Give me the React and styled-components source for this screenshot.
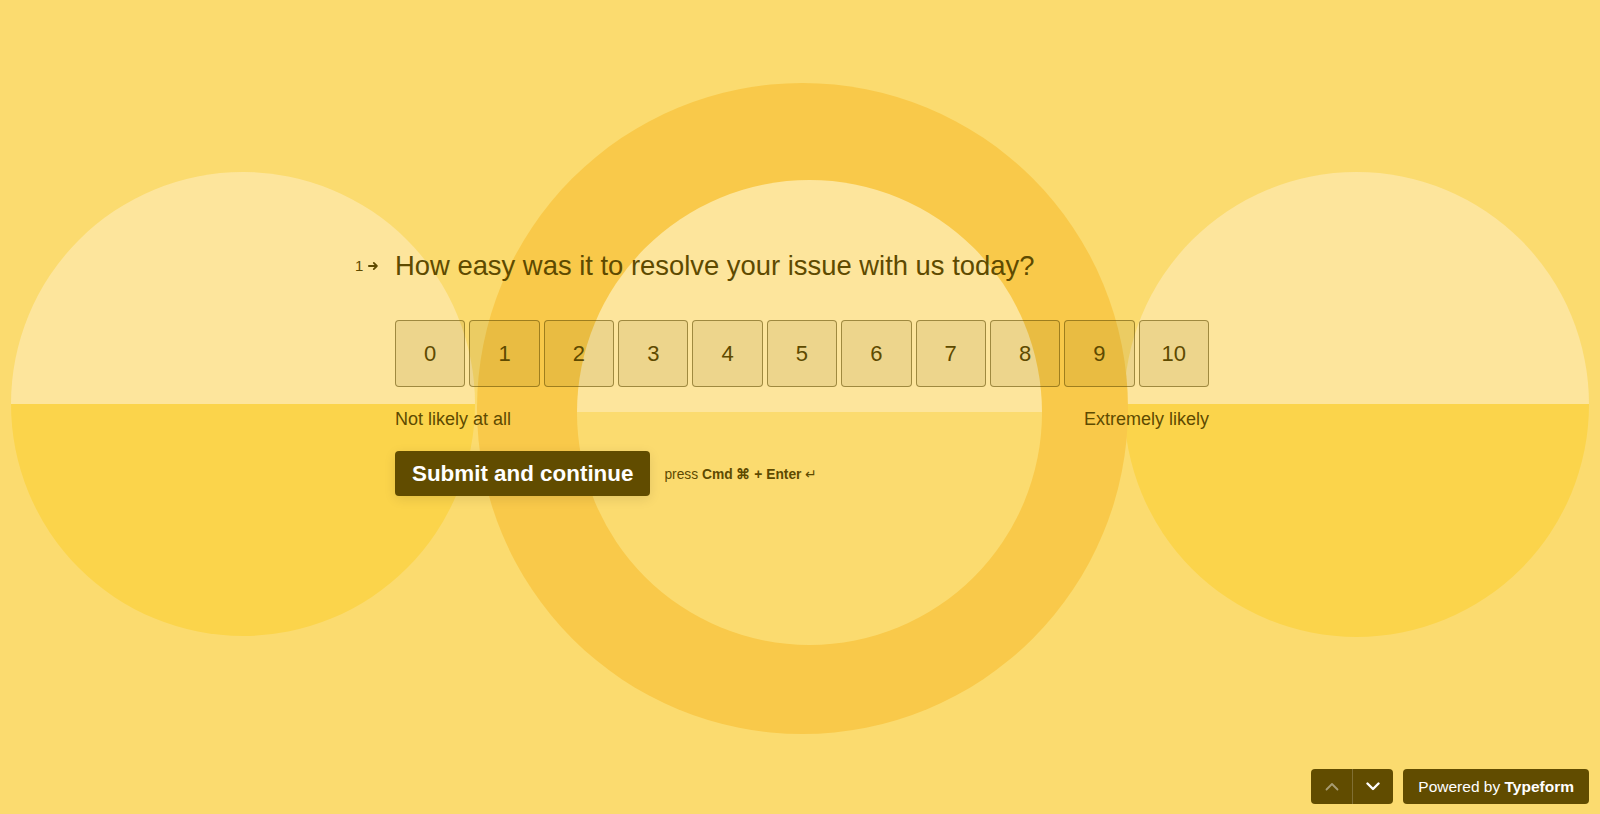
import React from "react";
import styled, { createGlobalStyle } from "styled-components";

const INK = "#5E4A00";
const BG = "#FBDB6F";
const LIGHT = "#FDE59C";
const SAT = "#FBD44B";
const RING = "#F9C94A";

const GlobalStyle = createGlobalStyle`
  html, body { margin: 0; padding: 0; }
  body {
    font-family: "Liberation Sans", Arial, Helvetica, sans-serif;
    background: ${BG};
    -webkit-font-smoothing: antialiased;
  }
`;

const Page = styled.div`
  position: relative;
  width: 100%;
  height: 100vh;
  overflow: hidden;
  background: ${BG};
`;

const Backdrop = styled.div`
  position: absolute;
  inset: 0;
  z-index: 0;
`;

const HalfDisc = styled.div`
  position: absolute;
  left: ${(p) => p.$cx - p.$d / 2}px;
  top: ${(p) => p.$cy - p.$d / 2}px;
  width: ${(p) => p.$d}px;
  height: ${(p) => p.$d}px;
  border-radius: 50%;
  background: linear-gradient(to bottom, ${LIGHT} 50%, ${(p) => p.$bottom} 50%);
`;

const RingDisc = styled.div`
  position: absolute;
  left: ${(p) => p.$cx - p.$d / 2}px;
  top: ${(p) => p.$cy - p.$d / 2}px;
  width: ${(p) => p.$d}px;
  height: ${(p) => p.$d}px;
  border-radius: 50%;
  background: ${RING};
`;

const Content = styled.main`
  position: relative;
  z-index: 1;
  display: flex;
  justify-content: center;
  padding-top: 248px;
`;

const Column = styled.div`
  width: 814px;
  padding-left: 4px;
  color: ${INK};
`;

const Question = styled.div`
  display: flex;
  align-items: center;
`;

const Counter = styled.div`
  flex: none;
  width: 40px;
  margin-left: -40px;
  box-sizing: border-box;
  padding-right: 16px;
  display: flex;
  align-items: center;
  justify-content: flex-end;
  gap: 5px;
  font-size: 15px;
  line-height: 16px;
`;

const QuestionText = styled.h1`
  margin: 0;
  font-size: 27.4px;
  font-weight: 400;
  line-height: 36px;
`;

const Scale = styled.div`
  margin-top: 36px;
  display: flex;
  gap: 4px;
`;

const ScaleBox = styled.button`
  flex: 1;
  height: 67px;
  box-sizing: border-box;
  padding: 0;
  border: 1px solid rgba(94, 74, 0, 0.55);
  border-radius: 4px;
  background: rgba(94, 74, 0, 0.1);
  color: ${INK};
  font-family: inherit;
  font-size: 22px;
  display: flex;
  align-items: center;
  justify-content: center;
  cursor: pointer;
`;

const Labels = styled.div`
  margin-top: 20px;
  display: flex;
  justify-content: space-between;
  font-size: 18px;
  line-height: 24px;
`;

const Actions = styled.div`
  margin-top: 20px;
  display: flex;
  align-items: center;
  gap: 14px;
`;

const SubmitButton = styled.button`
  height: 45px;
  padding: 0 17px;
  border: none;
  border-radius: 4px;
  background: #614C00;
  color: #fff;
  font-family: inherit;
  font-size: 22.4px;
  font-weight: 700;
  box-shadow: 0 3px 12px rgba(0, 0, 0, 0.1);
  cursor: pointer;
`;

const Hint = styled.div`
  font-size: 13.8px;
  color: ${INK};
  b { font-weight: 700; }
`;

const Footer = styled.div`
  position: fixed;
  right: 11px;
  bottom: 10px;
  z-index: 2;
  display: flex;
  gap: 10px;
`;

const NavGroup = styled.div`
  display: flex;
  height: 35px;
  border-radius: 4px;
  overflow: hidden;
  background: #614C00;
`;

const NavButton = styled.button`
  width: 41px;
  height: 35px;
  padding: 0;
  border: none;
  border-left: ${(p) => (p.$divider ? "1px solid rgba(255,255,255,0.2)" : "none")};
  background: transparent;
  display: flex;
  align-items: center;
  justify-content: center;
  color: ${(p) => (p.$disabled ? "rgba(255,255,255,0.45)" : "#fff")};
  cursor: pointer;
`;

const Powered = styled.div`
  height: 35px;
  padding: 0 15px;
  border-radius: 4px;
  background: #614C00;
  color: #fff;
  font-size: 15.5px;
  display: flex;
  align-items: center;
  white-space: pre;
  b { font-weight: 700; }
`;

const Arrow = () => (
  <svg width="12" height="10" viewBox="0 0 12 10" fill="none">
    <path d="M1 5h9M6.5 1.5L10 5l-3.5 3.5" stroke={INK} strokeWidth="2" strokeLinecap="round" strokeLinejoin="round" />
  </svg>
);

const Chevron = ({ up }) => (
  <svg width="14" height="9" viewBox="0 0 14 9" fill="none">
    <path
      d={up ? "M1.5 7.5L7 2l5.5 5.5" : "M1.5 1.5L7 7l5.5-5.5"}
      stroke="currentColor"
      strokeWidth={up ? 1.8 : 2.4}
      strokeLinecap="round"
      strokeLinejoin="round"
    />
  </svg>
);

export default function App() {
  const values = Array.from({ length: 11 }, (_, i) => i);
  return (
    <Page>
      <GlobalStyle />
      <Backdrop>
        <HalfDisc $cx={243} $cy={404} $d={464} $bottom={SAT} />
        <HalfDisc $cx={1356} $cy={404} $d={465} $bottom={SAT} />
        <RingDisc $cx={802} $cy={408} $d={651} />
        <HalfDisc $cx={809} $cy={412} $d={465} $bottom={BG} />
      </Backdrop>
      <Content>
        <Column>
          <Question>
            <Counter>
              <span>1</span>
              <Arrow />
            </Counter>
            <QuestionText>How easy was it to resolve your issue with us today?</QuestionText>
          </Question>
          <Scale>
            {values.map((v) => (
              <ScaleBox key={v}>{v}</ScaleBox>
            ))}
          </Scale>
          <Labels>
            <span>Not likely at all</span>
            <span>Extremely likely</span>
          </Labels>
          <Actions>
            <SubmitButton>Submit and continue</SubmitButton>
            <Hint>
              press <b>Cmd ⌘ + Enter</b> ↵
            </Hint>
          </Actions>
        </Column>
      </Content>
      <Footer>
        <NavGroup>
          <NavButton $disabled aria-label="previous">
            <Chevron up />
          </NavButton>
          <NavButton $divider aria-label="next">
            <Chevron />
          </NavButton>
        </NavGroup>
        <Powered>
          Powered by <b>Typeform</b>
        </Powered>
      </Footer>
    </Page>
  );
}
